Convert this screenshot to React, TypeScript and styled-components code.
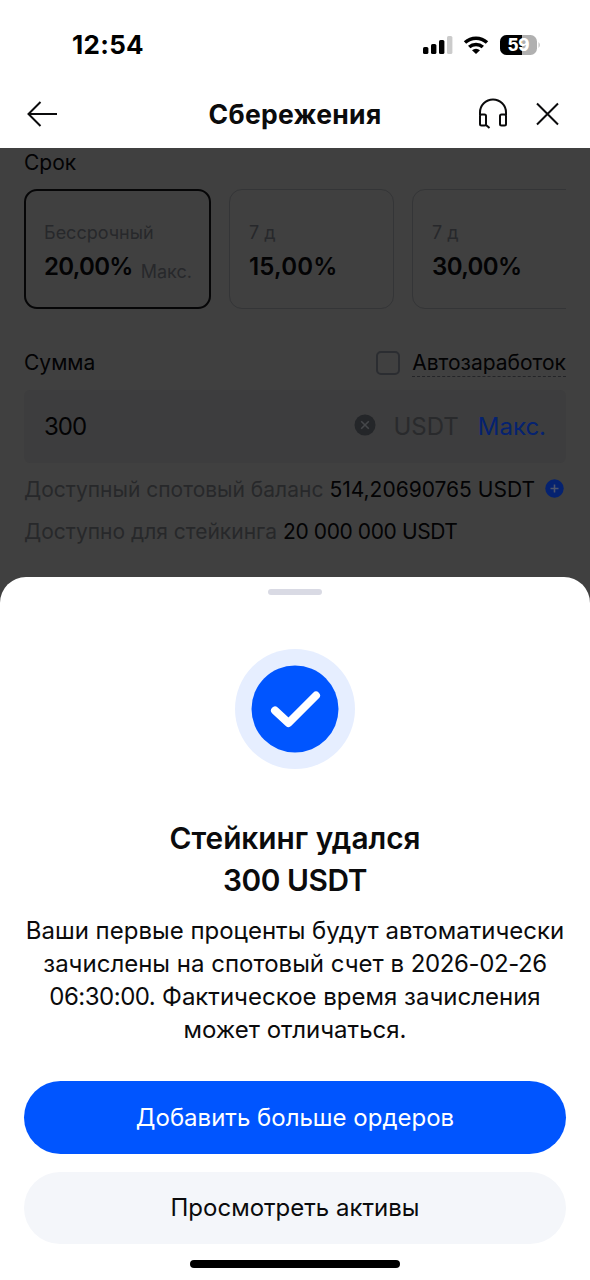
import React from "react";
import styled, { createGlobalStyle } from "styled-components";

const Global = createGlobalStyle`
  * { box-sizing: border-box; }
  body { margin: 0; background: #fff; }
  button { font: inherit; border: 0; padding: 0; background: none; }
`;

const Screen = styled.div`
  width: 590px;
  height: 1280px;
  overflow: hidden;
  display: flex;
  flex-direction: column;
  background: #fff;
  color: #0b0b0c;
  font-family: Inter, "Liberation Sans", sans-serif;
  white-space: nowrap;
`;

const StatusBar = styled.div`
  height: 80px;
  padding: 9px 49px 0 72px;
  display: flex;
  align-items: center;
  justify-content: space-between;
`;

const Clock = styled.div`
  font-size: 26px;
  font-weight: 700;
  line-height: 30px;
  letter-spacing: 0.3px;
  color: #000;
`;

const StatusIcons = styled.div`
  display: flex;
  align-items: center;
  svg { display: block; }
`;

const Header = styled.header`
  height: 68px;
  padding: 0 30px 0 24px;
  display: grid;
  grid-template-columns: 94px 1fr 88px;
  align-items: center;
  svg { display: block; }
`;

const Title = styled.h1`
  margin: 0;
  text-align: center;
  font-size: 26.5px;
  font-weight: 700;
  line-height: 32px;
  letter-spacing: 0.3px;
`;

const HeaderActions = styled.div`
  display: flex;
  align-items: center;
  justify-content: flex-end;
  gap: 25px;
`;

const Dimmed = styled.main`
  height: 465px;
  flex: none;
  padding: 1px 24px 0;
  background: #404040;
  color: #030304;
`;

const Label = styled.div`
  font-size: 21px;
  line-height: 28px;
`;

const Terms = styled.div`
  margin-top: 12px;
  display: flex;
  gap: 18px;
  overflow: hidden;
`;

const TermCard = styled.div<{ $width: number; $active?: boolean }>`
  flex: none;
  width: ${(p) => p.$width}px;
  height: 120px;
  padding: ${(p) => (p.$active ? "29px 18px" : "30px 19px")};
  border: ${(p) => (p.$active ? "2px solid #060607" : "1px solid #343537")};
  border-radius: 13px;
`;

const TermName = styled.div`
  font-size: 18px;
  line-height: 26px;
  color: #27282b;
`;

const Rate = styled.div`
  margin-top: 6px;
  display: flex;
  align-items: baseline;
  gap: 8px;
  font-size: 24px;
  font-weight: 600;
  line-height: 30px;
`;

const Digits = styled.span<{ $tracking: number }>`
  letter-spacing: ${(p) => p.$tracking}px;
`;

const RateNote = styled.span`
  position: relative;
  top: 3px;
  font-size: 18px;
  font-weight: 400;
  color: #27282b;
`;

const AmountHead = styled.div`
  margin-top: 40px;
  height: 28px;
  display: flex;
  justify-content: space-between;
  align-items: center;
`;

const AutoEarn = styled.div`
  display: flex;
  align-items: center;
  gap: 12px;
`;

const Checkbox = styled.span`
  width: 24px;
  height: 24px;
  border: 2px solid #2b2d31;
  border-radius: 5px;
`;

const DashedLabel = styled(Label)`
  height: 28px;
  border-bottom: 1px dashed #242528;
`;

const AmountField = styled.div`
  margin-top: 13px;
  height: 73px;
  padding: 0 20px;
  display: flex;
  align-items: center;
  border-radius: 6px;
  background: #3d3d3e;
  font-size: 24px;
  line-height: 30px;
  svg { display: block; margin: -3px 17px 0 0; }
`;

const AmountValue = styled.span`
  flex: 1;
  letter-spacing: -1px;
`;

const Currency = styled.span`
  color: #292a2c;
`;

const MaxButton = styled.button`
  margin-left: 19px;
  color: #052270;
`;

const BalanceRow = styled.div<{ $top: number }>`
  margin-top: ${(p) => p.$top}px;
  display: flex;
  align-items: center;
  gap: 6px;
  font-size: 21px;
  line-height: 28px;
  svg { display: block; flex: none; margin: -3px 0 0 4px; }
`;

const Muted = styled.span`
  color: #27282a;
`;

const Sheet = styled.section`
  position: relative;
  flex: 1;
  margin-top: -36px;
  padding: 12px 24px 0;
  display: flex;
  flex-direction: column;
  align-items: center;
  border-radius: 26px 26px 0 0;
  background: #fff;
`;

const Handle = styled.div`
  width: 54px;
  height: 6px;
  border-radius: 3px;
  background: #d9dae4;
`;

const SuccessMark = styled.svg`
  display: block;
  margin-top: 54px;
`;

const Heading = styled.h2`
  margin: 48px 0 0;
  text-align: center;
  font-size: 29.8px;
  font-weight: 600;
  line-height: 42px;
`;

const Message = styled.p`
  margin: 13px 0 0;
  text-align: center;
  font-size: 24px;
  line-height: 33px;
`;

const Actions = styled.div`
  align-self: stretch;
  margin-top: 35px;
  display: flex;
  flex-direction: column;
  gap: 18px;
`;

const Action = styled.button<{ $primary?: boolean }>`
  height: ${(p) => (p.$primary ? 73 : 72)}px;
  border-radius: 37px;
  font-size: 24px;
  line-height: 30px;
  background: ${(p) => (p.$primary ? "#0055ff" : "#f4f6fa")};
  color: ${(p) => (p.$primary ? "#fff" : "#0b0b0c")};
`;

const HomeIndicator = styled.div`
  width: 210px;
  height: 8px;
  margin-top: 16px;
  border-radius: 4px;
  background: #000;
`;

const BatteryText = styled.text`
  font: 800 17px Inter, sans-serif;
  fill: #fff;
`;

export default function App() {
  return (
    <Screen>
      <Global />
      <StatusBar>
        <Clock>12:54</Clock>
        <StatusIcons>
          <svg width="118" height="24" viewBox="0 0 118 24">
            <rect x="0" y="14" width="5.4" height="7" rx="1.6" />
            <rect x="8" y="11" width="5.4" height="10" rx="1.6" />
            <rect x="16" y="7" width="5.4" height="14" rx="1.6" />
            <rect x="24" y="3" width="5.4" height="18" rx="1.6" fill="#cbcbcb" />
            <g fill="none" stroke="#000" strokeWidth="3.5">
              <path d="M42 9.5a16.3 16.3 0 0 1 22 0" />
              <path d="M46.2 14a10.2 10.2 0 0 1 13.6 0" />
            </g>
            <path d="M49 17.2a6 6 0 0 1 8 0L53 21z" />
            <rect x="77" y="2" width="37" height="20" rx="6.5" fill="#b0b0b0" />
            <path d="M83.5 2H99v20H83.5A6.5 6.5 0 0 1 77 15.5V8.5A6.5 6.5 0 0 1 83.5 2z" />
            <path d="M115.6 9q2.200 3 0 6z" fill="#b0b0b0" />
            <BatteryText x="95.5" y="18" textAnchor="middle" textLength="22">59</BatteryText>
          </svg>
        </StatusIcons>
      </StatusBar>
      <Header>
        <svg width="36" height="32" viewBox="0 0 36 32" fill="none" stroke="#0b0b0c" strokeWidth="2">
          <path d="M33 16H4.5M16.5 4L4.5 16l12 12" />
        </svg>
        <Title>Сбережения</Title>
        <HeaderActions>
          <svg width="32" height="32" viewBox="0 0 32 32" fill="none" stroke="#0b0b0c" strokeWidth="2">
            <path d="M3 17v-2.5a13 13 0 0 1 26 0V17" />
            <rect x="3" y="16.5" width="6" height="11" rx="1.5" />
            <rect x="23" y="16.5" width="6" height="11" rx="1.5" />
            <path d="M9 27l3.5 3" />
          </svg>
          <svg width="26" height="26" viewBox="0 0 26 26" fill="none" stroke="#0b0b0c" strokeWidth="2">
            <path d="M3 2.5l21 21M24 2.5l-21 21" />
          </svg>
        </HeaderActions>
      </Header>
      <Dimmed>
        <Label>Срок</Label>
        <Terms>
          <TermCard $width={187} $active>
            <TermName>Бессрочный</TermName>
            <Rate><Digits $tracking={-0.7}>20,00%</Digits><RateNote>Макс.</RateNote></Rate>
          </TermCard>
          <TermCard $width={165}>
            <TermName>7 д</TermName>
            <Rate><Digits $tracking={0.2}>15,00%</Digits></Rate>
          </TermCard>
          <TermCard $width={187}>
            <TermName>7 д</TermName>
            <Rate><Digits $tracking={-0.6}>30,00%</Digits></Rate>
          </TermCard>
        </Terms>
        <AmountHead>
          <Label>Сумма</Label>
          <AutoEarn>
            <Checkbox />
            <DashedLabel>Автозаработок</DashedLabel>
          </AutoEarn>
        </AmountHead>
        <AmountField>
          <AmountValue>300</AmountValue>
          <svg width="22" height="22" viewBox="0 0 22 22">
            <circle cx="11" cy="11" r="10.5" fill="#242629" />
            <path d="M7.200 7.200l7.600 7.600M14.800 7.200l-7.600 7.600" stroke="#45474a" strokeWidth="1.6" />
          </svg>
          <Currency>USDT</Currency>
          <MaxButton>Макс.</MaxButton>
        </AmountField>
        <BalanceRow $top={13}>
          <Muted>Доступный спотовый баланс</Muted>
          <span>514,20690765 USDT</span>
          <svg width="19" height="19" viewBox="0 0 19 19">
            <circle cx="9.5" cy="9.5" r="9.2" fill="#052270" />
            <path d="M5.5 9.5h8M9.5 5.5v8" stroke="#4d556c" strokeWidth="1.6" />
          </svg>
        </BalanceRow>
        <BalanceRow $top={14}>
          <Muted>Доступно для стейкинга</Muted>
          <Digits $tracking={-0.4}>20 000 000 USDT</Digits>
        </BalanceRow>
      </Dimmed>
      <Sheet>
        <Handle />
        <SuccessMark width="120" height="120" viewBox="0 0 120 120">
          <circle cx="60" cy="60" r="60" fill="#e6eeff" />
          <circle cx="60" cy="60" r="43.5" fill="#0055ff" />
          <path d="M40 61.5L53.5 74 81 46.5" fill="none" stroke="#fff" strokeWidth="8" strokeLinecap="round" strokeLinejoin="round" />
        </SuccessMark>
        <Heading>Стейкинг удался<br /><Digits $tracking={-0.4}>300 USDT</Digits></Heading>
        <Message>
          Ваши первые проценты будут автоматически<br />
          зачислены на спотовый счет в <Digits $tracking={-0.4}>2026-02-26</Digits><br />
          <Digits $tracking={-0.5}>06:30:00.</Digits> Фактическое время зачисления<br />
          может отличаться.
        </Message>
        <Actions>
          <Action $primary>Добавить больше ордеров</Action>
          <Action>Просмотреть активы</Action>
        </Actions>
        <HomeIndicator />
      </Sheet>
    </Screen>
  );
}
